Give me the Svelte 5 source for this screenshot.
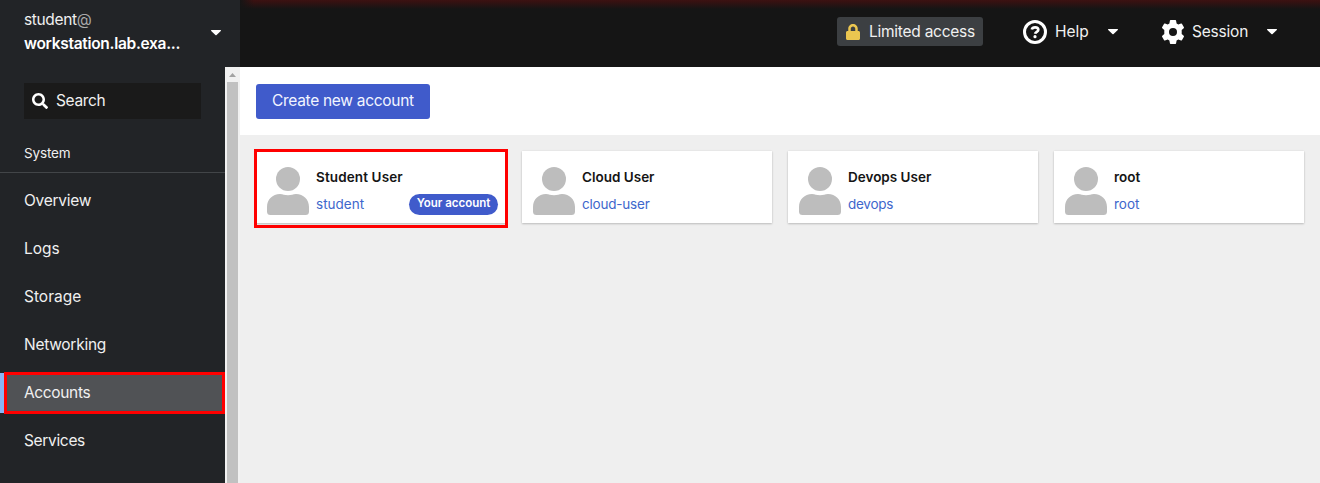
<script>
  const items = ['Overview', 'Logs', 'Storage', 'Networking', 'Accounts', 'Services'];
  const accounts = [
    { name: 'Student User', login: 'student', current: true },
    { name: 'Cloud User', login: 'cloud-user' },
    { name: 'Devops User', login: 'devops' },
    { name: 'root', login: 'root' }
  ];
</script>

{#snippet caret()}
  <svg class="caret" width="10" height="6" viewBox="0 0 10 6"><path d="M.6 0h8.800c.6 0 .8.600.4 1L5.600 5c-.4.400-.8.400-1.200 0L.2 1C-.2.600 0 0 .6 0z" fill="#fff" /></svg>
{/snippet}

<div class="page">
  <aside class="sidebar">
    <button class="host">
      <span class="who">
        <span class="user">student<span class="at">@</span></span>
        <span class="machine">workstation.lab.exa...</span>
      </span>
      {@render caret()}
    </button>
    <div class="navwrap">
      <nav>
        <div class="search">
          <svg width="16" height="16" viewBox="0 0 512 512"><path fill="#fff" d="M505 442.700 405.300 343c-4.500-4.500-10.600-7-17-7H372c27.600-35.300 44-79.700 44-128C416 93.100 322.900 0 208 0S0 93.100 0 208s93.100 208 208 208c48.300 0 92.700-16.400 128-44v16.300c0 6.400 2.500 12.500 7 17l99.700 99.700c9.400 9.400 24.600 9.400 33.900 0l28.300-28.300c9.400-9.400 9.400-24.600.1-34zM208 336c-70.700 0-128-57.200-128-128 0-70.700 57.200-128 128-128 70.700 0 128 57.200 128 128 0 70.700-57.200 128-128 128z" /></svg>
          <span>Search</span>
        </div>
        <h2>System</h2>
        <ul>
          {#each items as item}
            <li class:active={item === 'Accounts'}><span class={item.toLowerCase()}>{item}</span></li>
          {/each}
        </ul>
      </nav>
      <div class="scrollbar">
        <svg width="15" height="15" viewBox="0 0 15 15"><path d="M4 10h7L7.500 6z" fill="#a3a3a3" /></svg>
        <div class="thumb"></div>
      </div>
    </div>
  </aside>

  <div class="content">
    <header>
      <div class="limited">
        <svg width="14" height="16" viewBox="0 0 448 512"><path fill="#ebc650" d="M400 224h-24v-72C376 68.200 307.800 0 224 0S72 68.200 72 152v72H48c-26.500 0-48 21.500-48 48v192c0 26.500 21.500 48 48 48h352c26.500 0 48-21.500 48-48V272c0-26.500-21.500-48-48-48zm-104 0H152v-72c0-39.700 32.300-72 72-72s72 32.300 72 72v72z" /></svg>
        <span>Limited access</span>
      </div>
      <div class="menu help">
        <svg width="24" height="24" viewBox="0 0 24 24" fill="none" stroke="#fff">
          <circle cx="12" cy="12" r="10.500" stroke-width="3" />
          <path d="M8.800 9.500c.4-1.500 1.700-2.200 3.300-2.200 1.800 0 3.200.9 3.200 2.500 0 2-2.900 2-3.200 4" stroke-width="2.700" />
          <circle cx="12" cy="16.700" r="1.600" fill="#fff" stroke="none" />
        </svg>
        <span>Help</span>
        {@render caret()}
      </div>
      <div class="menu session">
        <svg width="24" height="24" viewBox="0 0 24 24"><path fill="#fff" fill-rule="evenodd" d="M9.600 0h4.800q.6 0 .7.700l.5 2.700 1.700 1 2.700-.9q.6-.2.900.3l2 3.500q.3.600-.2 1l-2 1.800v3.800l2 1.800q.5.400.2 1l-2 3.500q-.3.500-.9.300l-2.700-.9-1.700 1-.5 2.700q-.1.700-.7.700H9.600q-.6 0-.7-.7l-.5-2.700-1.700-1-2.700.9q-.6.200-.9-.3l-2-3.500q-.3-.6.200-1l2-1.800v-3.800l-2-1.800q-.5-.4-.2-1l2-3.500q.3-.5.900-.3l2.700.9 1.700-1 .5-2.700q.1-.7.700-.7zM12 8a4 4 0 1 0 0 8 4 4 0 0 0 0-8z" /></svg>
        <span>Session</span>
        {@render caret()}
      </div>
    </header>
    <div class="toolbar"><button class="create"><span>Create new account</span></button></div>
    <main>
      {#each accounts as account}
        <article class:selected={account.current}>
          <svg width="42" height="48" viewBox="0 0 42 48" fill="#bdbdbd">
            <circle cx="21" cy="12" r="12" />
            <path d="M13 27c3 0 4.500 1.300 8 1.300S26 27 29 27c7.500 0 13 5.500 13 13v4.500q0 3.500-3.500 3.500h-35Q0 48 0 44.500V40c0-7.500 5.500-13 13-13z" />
          </svg>
          <div class="info">
            <strong class={account.login}>{account.name}</strong>
            <div class="line"><a class={account.login}>{account.login}</a>{#if account.current}<span class="badge">Your account</span>{/if}</div>
          </div>
        </article>
      {/each}
    </main>
  </div>
</div>

<style>
  :global(body) { margin: 0; overflow: hidden; }
  * { box-sizing: border-box; }
  button { border: 0; font: inherit; text-align: left; }
  svg { display: block; flex: none; }
  .page { display: flex; width: 1320px; height: 483px; overflow: hidden; background: #efefef; font: 380 15.500px/24px Inter, sans-serif; color: #f0f0f0; white-space: nowrap; }
  .sidebar { width: 240px; flex: none; display: flex; flex-direction: column; background: #222427; }
  .host { height: 67px; padding: 8px 19px 11px 24px; display: flex; align-items: center; justify-content: space-between; background: #222427; color: #f0f0f0; }
  .who { display: flex; flex-direction: column; }
  .user { letter-spacing: -.36px; }
  .at { color: #aaa; }
  .machine { font-weight: 600; color: #fff; letter-spacing: -.3px; }
  .host .caret { margin-top: 1px; }
  .navwrap { display: flex; flex: 1; min-height: 0; }
  nav { width: 225px; padding-top: 16px; }
  .search { margin: 0 24px; height: 36px; width: 177px; padding: 0 8px; display: flex; align-items: center; gap: 8px; background: #1a1a1a; letter-spacing: -.35px; }
  h2 { margin: 0; height: 54px; padding: 24px 24px 0; border-bottom: 1px solid #424548; font-size: 13.500px; line-height: 21px; font-weight: 380; letter-spacing: -.15px; }
  ul { list-style: none; margin: 8px 0 0; padding: 0; display: flex; flex-direction: column; gap: 8px; }
  li { height: 40px; padding: 8px 24px; }
  .overview { letter-spacing: -.25px; }
  .networking { letter-spacing: -.27px; }
  .accounts { letter-spacing: -.35px; }
  .services { letter-spacing: -.33px; }
  .active { position: relative; background: #505255; box-shadow: inset 4px 0 #8ab5f5; }
  .active::after { content: ''; position: absolute; inset: -1px 0 -1px 4px; border: 3px solid #f00; }
  .scrollbar { width: 15px; padding: 0 2px; background: #f1f1f1; display: flex; flex-direction: column; align-items: center; }
  .thumb { width: 11px; flex: 1; background: #c1c1c1; }
  .content { flex: 1; min-width: 0; display: flex; flex-direction: column; }
  header { height: 67px; padding: 0 43px 4px 0; display: flex; align-items: center; justify-content: flex-end; background: linear-gradient(90deg, #151515 0, transparent 14px) 0 0 / 100% 9px no-repeat, linear-gradient(#3c1212 0, #351111 2px, #151515 9px); }
  .limited { width: 146px; height: 29px; margin-right: 40px; padding: 0 9px; display: flex; align-items: center; gap: 9px; border-radius: 3px; background: #3c3f42; letter-spacing: -.25px; }
  .menu { display: flex; align-items: center; gap: 8px; }
  .limited span, .menu span { padding-top: 1px; }
  .menu .caret { margin-left: auto; }
  .help { width: 95px; margin-right: 43px; }
  .session { width: 116px; gap: 7px; letter-spacing: -.2px; }
  .toolbar { height: 68px; padding: 17px 16px; background: #fff; }
  .create { width: 174px; height: 35px; padding: 0 16px 1px; display: block; border-radius: 3px; background: #405bcb; color: #f2f5ff; letter-spacing: -.3px; }
  main { display: grid; grid-template-columns: repeat(4, 250px); gap: 16px; padding: 16px; }
  article { height: 72px; padding: 16px 8px 8px 11px; display: flex; gap: 7px; background: #fff; box-shadow: 0 1px 2px #0003, 0 0 2px #0001; }
  .selected { position: relative; }
  .selected::after { content: ''; position: absolute; inset: -2px -2px -5px; border: 3px solid #f00; }
  .info { flex: 1; color: #151515; font-size: 13.500px; }
  strong { display: block; height: 21px; line-height: 21px; font-weight: 600; }
  strong.student { letter-spacing: .12px; }
  .line { display: flex; justify-content: space-between; height: 21px; margin-top: 6px; line-height: 21px; }
  a { color: #3e67cc; }
  a.cloud-user { letter-spacing: -.2px; }
  a.devops { letter-spacing: -.25px; }
  .badge { width: 89px; height: 21px; border-radius: 11px; background: #405bcb; color: #fff; text-align: center; font-size: 11.500px; line-height: 19px; font-weight: 600; }
</style>
